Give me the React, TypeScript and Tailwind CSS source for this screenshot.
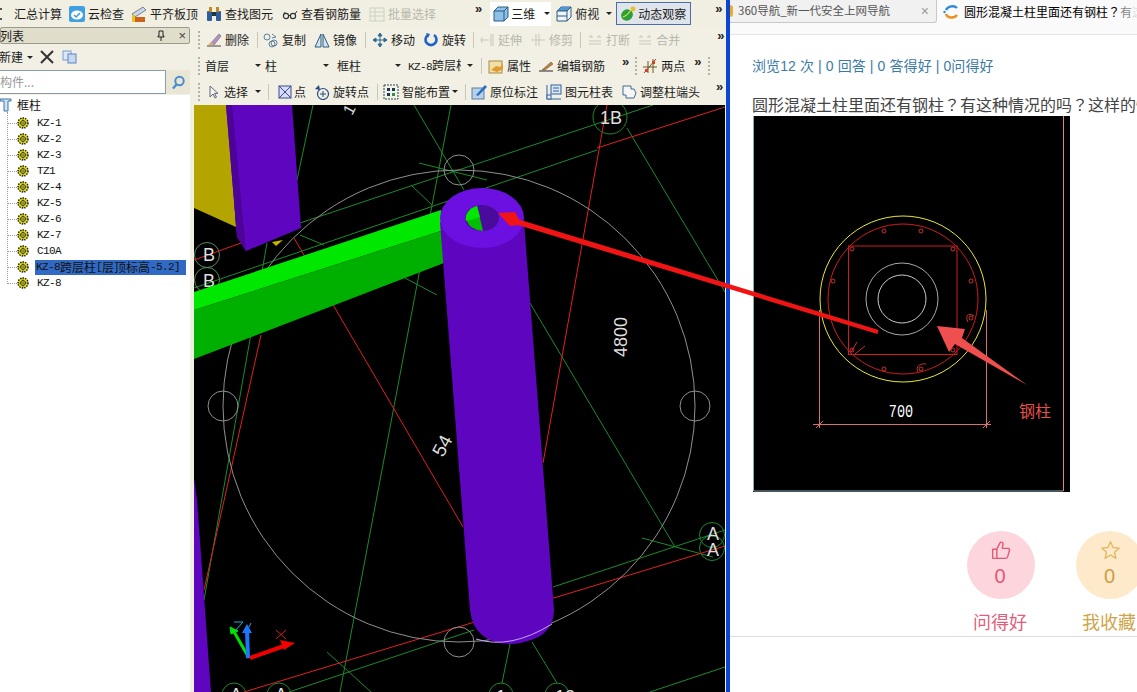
import React from "react";

type IconProps = { children?: React.ReactNode };
const Ico = ({ children }: IconProps) => (
  <svg width="16" height="16" viewBox="0 0 16 16" className="shrink-0" fill="none">
    {children}
  </svg>
);

const icons: Record<string, React.ReactNode> = {
  sum: <Ico><path d="M-1 3h10M-1 13h10M2 3l4 5-4 5" stroke="#222" strokeWidth="1.4" transform="translate(-7 0)" /></Ico>,
  cloud: (
    <Ico>
      <rect x="0" y="0" width="16" height="16" rx="2" fill="#3f9fe0" />
      <ellipse cx="8" cy="9" rx="6" ry="4.5" fill="#fff" />
      <path d="M5 9l2.2 2L11 7" stroke="#3f9fe0" strokeWidth="1.6" />
    </Ico>
  ),
  slab: (
    <Ico>
      <path d="M1 8L12 1l3 3L4 11z" fill="#c8d8e8" stroke="#667" strokeWidth=".8" />
      <rect x="3" y="11" width="11" height="5" fill="#c9641e" />
      <rect x="1" y="9" width="3" height="7" fill="#e8c020" />
    </Ico>
  ),
  binoc: (
    <Ico>
      <rect x="1" y="5" width="5" height="10" rx="1" fill="#2e5d9e" />
      <rect x="10" y="5" width="5" height="10" rx="1" fill="#2e5d9e" />
      <rect x="3" y="1" width="3" height="5" fill="#c08a20" />
      <rect x="10" y="1" width="3" height="5" fill="#c08a20" />
      <rect x="6" y="6" width="4" height="4" fill="#233" />
    </Ico>
  ),
  glasses: (
    <Ico>
      <circle cx="4" cy="10" r="2.6" stroke="#333" strokeWidth="1.2" />
      <circle cx="11" cy="10" r="2.6" stroke="#333" strokeWidth="1.2" />
      <path d="M6.5 9.5h2M13 8l2-3M2 8l1-2" stroke="#333" />
    </Ico>
  ),
  batch: (
    <Ico>
      <rect x="1" y="2" width="14" height="13" stroke="#d0cfc6" />
      <path d="M1 6h14M1 10h14M6 2v13" stroke="#d0cfc6" />
    </Ico>
  ),
  cube3d: (
    <Ico>
      <path d="M1 5l4-4h10v10l-4 4H1z" fill="#8fc0e8" stroke="#2c5a80" />
      <path d="M1 5h10v10M11 5l4-4" stroke="#2c5a80" />
    </Ico>
  ),
  cubeTop: (
    <Ico>
      <path d="M1 5l4-4h10v10l-4 4H1z" fill="#eef5fb" stroke="#2c5a80" />
      <path d="M1 5l4-4h10l-4 4z" fill="#4f97d0" />
      <path d="M1 5h10v10M11 5l4-4M1 10h10" stroke="#2c5a80" />
    </Ico>
  ),
  orbit: (
    <Ico>
      <ellipse cx="7" cy="9" rx="6" ry="5.5" fill="#2e9e3a" transform="rotate(-35 7 9)" />
      <path d="M3 11c3-1 6-4 8-7" stroke="#c4e84a" strokeWidth="1.2" />
      <circle cx="13" cy="3" r="2.4" fill="#e8c020" />
    </Ico>
  ),
  erase: (
    <Ico>
      <path d="M1 14h14" stroke="#444" />
      <path d="M5 11L13 2l2 2-7 9z" fill="#b48fd0" stroke="#665" strokeWidth=".6" />
      <path d="M2 13l3-3 3 3z" fill="#e0b060" />
    </Ico>
  ),
  copy: (
    <Ico>
      <circle cx="4" cy="5" r="3" stroke="#5c7f9c" />
      <circle cx="11" cy="11" r="3" stroke="#5c7f9c" />
      <circle cx="9" cy="12" r="3" stroke="#5c7f9c" />
      <path d="M9 2l4 3-4 1" stroke="#5c7f9c" />
    </Ico>
  ),
  mirror: (
    <Ico>
      <path d="M7 2L1 15h6zM9 2l6 13H9z" stroke="#2b5c80" fill="#d4e4f0" />
    </Ico>
  ),
  move: (
    <Ico>
      <path d="M8 1v14M1 8h14M8 1L6 4h4zM8 15l-2-3h4zM1 8l3-2v4zM15 8l-3-2v4z" stroke="#2c6a94" fill="#2c6a94" />
    </Ico>
  ),
  rotate: (
    <Ico>
      <path d="M11 3a5.5 5.5 0 1 1-6 0" stroke="#1f62c8" strokeWidth="2.6" />
      <path d="M3 1l4 1-2 4z" fill="#1f62c8" />
    </Ico>
  ),
  extend: <Ico><path d="M1 8h9M3 5v6M12 2v12M14 2v12" stroke="#c8c7bd" /></Ico>,
  trim: <Ico><path d="M1 8h14M6 2v12M9 2v12" stroke="#c8c7bd" /></Ico>,
  cut: <Ico><path d="M2 5h4M10 5h4M2 12h12M2 9h12M4 3v2M12 3v2" stroke="#c8c7bd" /></Ico>,
  attr: (
    <Ico>
      <rect x="1" y="3" width="13" height="12" fill="#f0e0a8" stroke="#a88a40" />
      <path d="M3 12l5-4 4 1 3-3v5l-6 3z" fill="#e09a30" />
    </Ico>
  ),
  pen: (
    <Ico>
      <path d="M1 13h14" stroke="#222" />
      <path d="M4 12L13 4l2 2-8 6z" fill="#c08040" stroke="#553" strokeWidth=".5" />
    </Ico>
  ),
  twoPts: (
    <Ico>
      <path d="M2 15L14 1M1 9h14M6 3v12M11 1v14" stroke="#6b5a20" />
      <rect x="3" y="11" width="3" height="3" fill="#d84020" />
      <rect x="10" y="3" width="3" height="3" fill="#d84020" />
    </Ico>
  ),
  pointer: <Ico><path d="M5 2v11l3-3 2 4 1.5-.8-2-3.8H13z" fill="#f4f4f4" stroke="#667" /></Ico>,
  point: (
    <Ico>
      <rect x="2" y="2" width="12" height="12" fill="#d8dcf4" stroke="#3a4a90" />
      <path d="M2 2l12 12M14 2L2 14" stroke="#3a4a90" />
    </Ico>
  ),
  rotPt: (
    <Ico>
      <circle cx="9" cy="10" r="5.5" stroke="#254a80" strokeWidth="1.2" />
      <path d="M9 7v6M6 10h6" stroke="#254a80" />
      <path d="M1 5l4-4 1 5z" fill="#254a80" />
    </Ico>
  ),
  smart: (
    <Ico>
      <rect x="1" y="1" width="14" height="14" fill="#eef4e8" stroke="#345" strokeDasharray="2 1" />
      <rect x="4" y="4" width="3" height="3" fill="#235" />
      <rect x="9" y="4" width="3" height="3" fill="#235" />
      <rect x="4" y="9" width="3" height="3" fill="#235" />
      <rect x="9" y="9" width="3" height="3" fill="#3a8a50" />
    </Ico>
  ),
  mark: (
    <Ico>
      <rect x="1" y="4" width="12" height="11" fill="#b8d0e8" stroke="#5a80a8" />
      <path d="M5 11L14 1l2 2-9 9z" fill="#2c6cc0" />
    </Ico>
  ),
  table: (
    <Ico>
      <path d="M1 1v14h14" stroke="#3060a0" />
      <rect x="5" y="1" width="10" height="9" fill="#dce8f6" stroke="#3060a0" />
      <path d="M7 4h6M7 7h6" stroke="#3060a0" />
      <rect x="1" y="11" width="4" height="4" fill="#e8eef8" stroke="#3060a0" />
    </Ico>
  ),
  adjust: <Ico><path d="M2 2h8v3h3l2 4-2 5H5v-3H2z" fill="#f6f6f6" stroke="#3d6a94" /></Ico>,
};

const Grip = ({ className = "" }: { className?: string }) => (
  <div className={`w-[3px] h-[18px] shrink-0 border-l-2 border-dotted border-[#b5b2a0] ${className}`} />
);
const Sep = ({ className = "" }: { className?: string }) => (
  <div className={`w-px h-[16px] shrink-0 bg-[#c9c6b4] ${className}`} />
);
const Caret = ({ className = "" }: { className?: string }) => (
  <div className={`w-0 h-0 shrink-0 border-x-[3px] border-x-transparent border-t-[3px] border-t-[#222] ${className}`} />
);
const More = ({ className = "" }: { className?: string }) => (
  <span className={`shrink-0 self-start mt-[2px] text-[13px] leading-none font-bold text-[#222] font-['Liberation_Sans',sans-serif] ${className}`}>»</span>
);
const Tool = ({
  icon,
  label,
  className = "",
  muted = false,
}: {
  icon: string;
  label: string;
  className?: string;
  muted?: boolean;
}) => (
  <div className={`flex items-center gap-[3px] shrink-0 ${className}`}>
    {icons[icon]}
    <span className={`whitespace-nowrap ${muted ? "text-[#b8b7ad]" : "text-[#1c1c1c]"}`}>{label}</span>
  </div>
);

const Gear = () => (
  <svg width="12" height="12" viewBox="0 0 12 12" className="shrink-0">
    <circle cx="6" cy="6" r="5" fill="#f0f000" stroke="#222" strokeWidth="1.5" strokeDasharray="1.5 1" />
    <circle cx="6" cy="6" r="2.5" fill="none" stroke="#333" strokeWidth="1" />
    <path d="M1 6h10M6 1v10" stroke="#333" strokeWidth=".6" />
  </svg>
);

const TreeRow = ({ children, selected = false }: { children: React.ReactNode; selected?: boolean }) => (
  <div className="h-4 flex items-center relative">
    <div className="w-[10px] ml-[7px] border-t border-dotted border-[#999]" />
    <Gear />
    <div
      className={`h-[15px] flex items-center text-[#111] font-['Liberation_Mono',monospace] text-[11px] tracking-[-0.6px] whitespace-nowrap ${
        selected ? "bg-[#316ac5] ml-[6px] pl-px w-[151px]" : "ml-[8px]"
      }`}
    >
      {children}
    </div>
  </div>
);

const C = ({ children }: { children: React.ReactNode }) => (
  <span className="text-[12px] tracking-normal font-['Noto_Sans_CJK_SC',sans-serif]">{children}</span>
);

const Q = () => <span className="font-['Noto_Sans_CJK_TC',sans-serif]">？</span>;

const G = "#1c8a2c";
const R = "#e02020";
const W = "#909090";

const Canvas = () => (
  <svg viewBox="194 105 531 587" className="block w-[531px] h-[587px]">
    <rect x="194" y="105" width="531" height="587" fill="#000" />
    <g stroke={G} strokeWidth="1" fill="none">
      <path d="M194 288L597 150" />
      <path d="M300 223L653 105" />
      <path d="M414 105L464 190" />
      <path d="M451 105L340 692" />
      <path d="M313 105L297 180" />
      <path d="M267 243L204 600" />
      <path d="M419 163L487 180" />
      <path d="M411 185L432 205" />
      <path d="M300 235L324 245" />
      <path d="M627 128L725 292" />
      <path d="M530 303L675 547" />
      <path d="M403 277L437 295" />
      <path d="M642 538L713 557" />
      <path d="M553 587L725 530" />
      <path d="M650 692L725 667" />
      <path d="M289 692L474 630" />
      <path d="M327 652L371 692" />
      <path d="M510 644L502 683" />
      <path d="M532 642L557 683" />
      <circle cx="610" cy="117" r="17" />
      <circle cx="712" cy="535" r="12.500" />
      <circle cx="712" cy="548" r="12.500" />
      <circle cx="501" cy="695" r="12" />
      <circle cx="557" cy="695" r="12" />
      <circle cx="234" cy="695" r="12" />
      <circle cx="279" cy="695" r="12" />
      <circle cx="207" cy="255" r="12.500" stroke="#5a8a60" />
      <circle cx="207" cy="280" r="12.500" stroke="#5a8a60" />
    </g>
    <g stroke={R} strokeWidth="1" fill="none">
      <path d="M607 105L543 463" />
      <path d="M597 148L725 107" />
      <path d="M294 238L463 527" />
      <path d="M244 692L725 546" />
      <path d="M261 335L204 590" />
      <path d="M194 260L241 243" />
    </g>
    <g stroke={W} strokeWidth="1" fill="none">
      <circle cx="459" cy="406" r="236" />
      <circle cx="459" cy="170" r="15" />
      <circle cx="223" cy="406" r="15" />
      <circle cx="695" cy="406" r="15" />
      <circle cx="459" cy="642" r="15" />
    </g>
    <g fill="#ddd" fontFamily="'Liberation Sans',sans-serif">
      <text x="209" y="261" fontSize="18" textAnchor="middle">B</text>
      <text x="209" y="287" fontSize="18" textAnchor="middle">B</text>
      <text x="611" y="124" fontSize="18" textAnchor="middle">1B</text>
      <text x="713" y="540" fontSize="18" textAnchor="middle">A</text>
      <text x="713" y="556" fontSize="18" textAnchor="middle">A</text>
      <text x="501" y="703" fontSize="18" textAnchor="middle">1</text>
      <text x="565" y="703" fontSize="18" textAnchor="middle">12</text>
      <text x="236" y="701" fontSize="18" textAnchor="middle">A</text>
      <text x="281" y="701" fontSize="18" textAnchor="middle">A</text>
      <text transform="translate(627 337) rotate(-90)" fontSize="18" textAnchor="middle">4800</text>
      <text transform="translate(443 458) rotate(-62)" fontSize="19">54</text>
      <text transform="translate(352 116) rotate(-62)" fontSize="16">1</text>
    </g>
    <path d="M194 105H228L236 227L194 208Z" fill="#b3a400" />
    <path d="M272 242L283 240L276 246Z" fill="#c8b400" />
    <path d="M226 105H292L301 228L246 251L237 237Z" fill="#5e05c0" />
    <path d="M226 105H232L246 251L237 237Z" fill="#4b0398" />
    <path d="M194 478L197 500L211 692H194Z" fill="#5e05c0" />
    <path d="M194 292L441 210L444 230L194 310Z" fill="#00e800" />
    <path d="M194 310L444 230L444 263L194 359Z" fill="#00b000" />
    <path d="M440 222L470 610Q474 644 512 644Q554 640 554 610L524 222Z" fill="#5e05c0" />
    <ellipse cx="482" cy="218" rx="42" ry="30" fill="#6b10e0" />
    <ellipse cx="482" cy="218" rx="17" ry="13" fill="#4a0a9c" />
    <path d="M477 206A17 13 0 0 0 483 231Z" fill="#00c000" />
    <path d="M477 206L480 217L466 221A17 13 0 0 1 477 206Z" fill="#00e800" />
    <path d="M476 639Q510 650 552 624" stroke="#c6a6ff" strokeWidth="1" fill="none" />
    <path d="M249 658L233 630" stroke="#00e000" strokeWidth="3" />
    <path d="M230 627L238 631L231 634Z" fill="#00e000" stroke="#00e000" />
    <path d="M248 658L247 630" stroke="#1878ff" strokeWidth="4" />
    <path d="M247 624L252 633H242Z" fill="#1878ff" />
    <path d="M250 658L284 646" stroke="#f00000" strokeWidth="4" />
    <path d="M295 643L280 640L284 650Z" fill="#f00000" />
    <path d="M276 630L286 639M286 630L276 639" stroke="#d02020" />
    <path d="M234 622H243L235 631M249 627L251 623" stroke="#2ea8d0" fill="none" />
  </svg>
);

const Drawing = () => (
  <svg viewBox="753 116 317 376" className="block w-[317px] h-[376px]">
    <rect x="753" y="116" width="317" height="376" fill="#000" />
    <path d="M753.5 116V491H1063" stroke="#8fa9b8" fill="none" />
    <path d="M1063.5 116V491" stroke="#d88a8a" fill="none" />
    <circle cx="903" cy="299" r="83" stroke="#e8e830" fill="none" />
    <circle cx="903" cy="299" r="75" stroke="#d01c1c" fill="none" />
    <rect x="848.5" y="246" width="108.5" height="108.5" stroke="#d01c1c" fill="none" />
    <circle cx="902" cy="299" r="36" stroke="#a8a8a8" fill="none" />
    <circle cx="902" cy="299" r="24" stroke="#c8c8c8" fill="none" />
    <g stroke="#c83030" fill="none">
      <circle cx="884" cy="231" r="2" />
      <circle cx="921" cy="231" r="2" />
      <circle cx="852" cy="249" r="2" />
      <circle cx="953" cy="249" r="2" />
      <circle cx="833" cy="281" r="2" />
      <circle cx="971" cy="281" r="2" />
      <circle cx="852" cy="350" r="2" />
      <circle cx="953" cy="350" r="2" />
      <circle cx="884" cy="369" r="2" />
      <circle cx="921" cy="369" r="2" />
      <circle cx="971" cy="318" r="2" />
      <path d="M918 372c-3-5 2-9 8-8M968 322c-3-6 0-10 6-6M851 352l6-10M855 354l10-8" />
    </g>
    <g stroke="#d87070" fill="none">
      <path d="M819.5 310V428M986.5 310V428M813 424.5H991" />
      <path d="M816 428l7-7M983 428l7-7" />
    </g>
    <text x="901" y="417" fontSize="18" fill="#fff" textAnchor="middle" fontFamily="'Liberation Mono',monospace" transform="translate(225.250 0) scale(.75 1)">700</text>
    <text x="1019" y="417" fontSize="16" fill="#e4504c" fontFamily="'Noto Sans CJK SC',sans-serif">钢柱</text>
    <path d="M937 326L965 329L962 338L1027 385L955 344L949 352Z" fill="#f04f4f" />
  </svg>
);

export default function App() {
  return (
    <div className="relative w-[1137px] h-[692px] overflow-hidden flex bg-white font-['Noto_Sans_CJK_SC',sans-serif]">
      {/* CAD application */}
      <div className="w-[730px] h-full shrink-0 flex flex-col bg-[#f2f0e4] border-r-4 border-[#0b45d6] text-[12px] leading-none overflow-hidden">
        <div className="h-[27px] shrink-0 flex items-center bg-[#f1efe2] overflow-hidden">
          <div className="w-[8px] h-4 overflow-hidden shrink-0">{icons.sum}</div>
          <span className="ml-[6px] text-[#1c1c1c] whitespace-nowrap">汇总计算</span>
          <Tool className="ml-[7px]" icon="cloud" label="云检查" />
          <Tool className="ml-[7px]" icon="slab" label="平齐板顶" />
          <Tool className="ml-[8px]" icon="binoc" label="查找图元" />
          <Tool className="ml-[9px]" icon="glasses" label="查看钢筋量" />
          <Tool className="ml-[8px]" icon="batch" label="批量选择" muted />
          <More className="ml-[39px]" />
          <div className="ml-[8px] w-[61px] h-[24px] bg-white flex items-center pl-[3px] shrink-0">
            {icons.cube3d}
            <span className="ml-[2px] text-[#1c1c1c]">三维</span>
            <Caret className="ml-[9px]" />
          </div>
          <Tool className="ml-[5px]" icon="cubeTop" label="俯视" />
          <Caret className="ml-[7px]" />
          <div className="ml-[4px] w-[75px] h-[23px] shrink-0 flex items-center gap-[2px] pl-[3px] bg-[#dfe4ea] border border-[#4a6ea9]">
            {icons.orbit}
            <span className="whitespace-nowrap text-[#1c1c1c]">动态观察</span>
          </div>
          <More className="ml-[24px]" />
        </div>

        <div className="flex-1 flex min-h-0">
          {/* Left list panel */}
          <div className="w-[194px] shrink-0 flex flex-col">
            <div className="w-[190px] h-[17px] shrink-0 flex items-center bg-[#e0ddcb] border border-[#9c9a8a] rounded-[2px] overflow-hidden">
              <span className="text-[12px] text-[#222] -ml-[1px]">列表</span>
              <svg width="10" height="12" viewBox="0 0 10 12" className="ml-auto mr-[12px]">
                <path d="M3 1h4v5h1v1H2V6h1zM5 7v4" stroke="#222" fill="none" />
              </svg>
              <span className="mr-[3px] text-[13px] text-[#444] font-['Liberation_Sans',sans-serif]">×</span>
            </div>
            <div className="w-[190px] h-[26px] shrink-0 flex items-center">
              <span className="text-[#1c1c1c] -ml-[1px] whitespace-nowrap">新建</span>
              <Caret className="ml-[4px]" />
              <svg width="14" height="14" viewBox="0 0 14 14" className="ml-[7px]">
                <path d="M1 1l12 12M13 1L1 13" stroke="#333" strokeWidth="2" />
              </svg>
              <svg width="16" height="14" viewBox="0 0 16 14" className="ml-[8px]">
                <rect x="1" y="1" width="8" height="9" fill="#dbe6f6" stroke="#7a9cd0" />
                <rect x="6" y="4" width="8" height="9" fill="#c6d8f2" stroke="#5f86c4" />
              </svg>
            </div>
            <div className="w-[190px] h-[25px] shrink-0 flex">
              <div className="w-[166px] h-[24px] bg-white border border-[#8a9bb0] border-l-0 flex items-center text-[#999] pl-0">
                构件...
              </div>
              <div className="w-[24px] h-[24px] flex items-center justify-center bg-[#e9e6d6]">
                <svg width="15" height="15" viewBox="0 0 15 15" fill="none">
                  <circle cx="8.5" cy="6" r="4.2" stroke="#4a8ed0" strokeWidth="2" />
                  <path d="M5.500 9.500L2 13.500" stroke="#4a8ed0" strokeWidth="2.4" />
                </svg>
              </div>
            </div>
            <div className="w-[190px] flex-1 bg-white relative overflow-hidden pt-[1px]">
              <div className="h-[17px] mb-[2px] flex items-center">
                <svg width="12" height="14" viewBox="0 0 12 14" className="ml-0 shrink-0">
                  <path d="M0 1h11v2H8v10H4V3H0z" fill="#cfe2f4" stroke="#3a72a8" />
                </svg>
                <span className="ml-[5px] text-[#111]">框柱</span>
              </div>
              <div className="absolute left-[7px] top-[17px] h-[170px] border-l border-dotted border-[#999]" />
              <TreeRow>KZ-1</TreeRow>
              <TreeRow>KZ-2</TreeRow>
              <TreeRow>KZ-3</TreeRow>
              <TreeRow>TZ1</TreeRow>
              <TreeRow>KZ-4</TreeRow>
              <TreeRow>KZ-5</TreeRow>
              <TreeRow>KZ-6</TreeRow>
              <TreeRow>KZ-7</TreeRow>
              <TreeRow>C10A</TreeRow>
              <TreeRow selected>
                KZ-8<C>跨层柱</C>[<C>层顶标高</C>-5.2]
              </TreeRow>
              <TreeRow>KZ-8</TreeRow>
            </div>
          </div>

          {/* Main work area */}
          <div className="w-[532px] shrink-0 flex flex-col">
            <div className="h-[26px] shrink-0 flex items-center overflow-hidden">
              <Grip className="ml-[4px]" />
              <Tool className="ml-[5px]" icon="erase" label="删除" />
              <Sep className="ml-[8px]" />
              <Tool className="ml-[5px]" icon="copy" label="复制" />
              <Tool className="ml-[8px]" icon="mirror" label="镜像" />
              <Sep className="ml-[8px]" />
              <Tool className="ml-[6px]" icon="move" label="移动" />
              <Tool className="ml-[8px]" icon="rotate" label="旋转" />
              <Sep className="ml-[7px]" />
              <Tool className="ml-[5px]" icon="extend" label="延伸" muted />
              <Tool className="ml-[8px]" icon="trim" label="修剪" muted />
              <Sep className="ml-[7px]" />
              <Tool className="ml-[6px]" icon="cut" label="打断" muted />
              <Tool className="ml-[7px]" icon="cut" label="合并" muted />
              <More className="ml-[37px]" />
            </div>
            <div className="h-[25px] shrink-0 flex items-center overflow-hidden">
              <Grip className="ml-[4px]" />
              <span className="ml-[4px] w-[50px] shrink-0 text-[#1c1c1c]">首层</span>
              <Caret />
              <span className="ml-[4px] w-[58px] shrink-0 text-[#1c1c1c]">柱</span>
              <Caret />
              <span className="ml-[8px] w-[58px] shrink-0 text-[#1c1c1c]">框柱</span>
              <Caret />
              <span className="ml-[7px] w-[53px] shrink-0 overflow-hidden whitespace-nowrap text-[#1c1c1c]">
                <span className="font-['Liberation_Mono',monospace] text-[11px] tracking-[-0.6px]">KZ-8</span>跨层柱
              </span>
              <Caret className="ml-[6px]" />
              <Sep className="ml-[8px]" />
              <Tool className="ml-[6px]" icon="attr" label="属性" />
              <Tool className="ml-[7px]" icon="pen" label="编辑钢筋" />
              <More className="ml-[17px]" />
              <Grip className="ml-[6px]" />
              <Tool className="ml-[4px]" icon="twoPts" label="两点" />
              <More className="ml-[9px]" />
              <Grip className="ml-[6px]" />
            </div>
            <div className="h-[27px] shrink-0 flex items-center overflow-hidden">
              <Grip className="ml-[4px]" />
              <Tool className="ml-[4px]" icon="pointer" label="" />
              <span className="text-[#1c1c1c] whitespace-nowrap">选择</span>
              <Caret className="ml-[7px]" />
              <Sep className="ml-[7px]" />
              <Tool className="ml-[8px]" icon="point" label="" />
              <span className="-ml-[2px] text-[#1c1c1c]">点</span>
              <Tool className="ml-[8px]" icon="rotPt" label="旋转点" />
              <Sep className="ml-[8px]" />
              <Tool className="ml-[5px]" icon="smart" label="智能布置" />
              <Caret className="ml-[2px]" />
              <Sep className="ml-[7px]" />
              <Tool className="ml-[5px]" icon="mark" label="原位标注" />
              <Tool className="ml-[8px]" icon="table" label="图元柱表" />
              <Tool className="ml-[8px]" icon="adjust" label="调整柱端头" />
              <More className="ml-[16px]" />
            </div>
            <Canvas />
          </div>
        </div>
      </div>

      {/* Browser */}
      <div className="flex-1 min-w-0 flex flex-col overflow-hidden">
        <div className="h-[23px] shrink-0 flex bg-[#f6f6f6] text-[12px] leading-none">
          <div className="w-[207px] shrink-0 flex items-center bg-[#f1f1f1] border-r border-b border-[#c8c8c8] rounded-br-[3px] overflow-hidden">
            <div className="w-[3px] h-[12px] bg-[#e8b020] rounded-r-full shrink-0" />
            <span className="ml-[5px] text-[#555] text-[11.5px] whitespace-nowrap">360导航_新一代安全上网导航</span>
            <span className="ml-auto mr-[7px] text-[#999] text-[14px] font-['Liberation_Sans',sans-serif]">×</span>
          </div>
          <div className="flex-1 min-w-0 flex items-center bg-[#fafafa] overflow-hidden">
            <svg width="16" height="14" viewBox="0 0 16 14" className="ml-[6px] shrink-0" fill="none">
              <path d="M3 9c1 4 8 5 11 1" stroke="#e89020" strokeWidth="2.4" />
              <path d="M3 5c2-4 8-5 11-2" stroke="#2a8ad8" strokeWidth="2.4" />
              <circle cx="1.5" cy="7" r="1.2" fill="#2a8ad8" />
            </svg>
            <span className="ml-[5px] whitespace-nowrap text-black">
              圆形混凝土柱里面还有钢柱<Q /><span className="text-[#888]">有</span>
              <span className="text-[#ddd]">这</span>
            </span>
          </div>
        </div>
        <div className="h-[12px] shrink-0 bg-[#fafafa] border-b border-[#e4e4e4]" />
        <div className="flex-1 min-h-0 flex flex-col overflow-hidden bg-white">
          <div className="pl-[22px] pt-[22px] h-[57px] shrink-0 text-[14px] leading-[18px] tracking-[0.1px] text-[#3b7aa6] whitespace-nowrap font-['Liberation_Sans','Noto_Sans_CJK_SC',sans-serif]">
            浏览12 次 | 0 回答 | 0 答得好 | 0问得好
          </div>
          <div className="pl-[22px] h-[24px] shrink-0 text-[16px] leading-[24px] text-[#444] whitespace-nowrap">
            圆形混凝土柱里面还有钢柱<Q />有这种情况的吗<Q />这样的情况
          </div>
          <div className="pl-[23px] shrink-0">
            <Drawing />
          </div>
          <div className="flex shrink-0 mt-[39px] pl-[237px] gap-[41px]">
            <div className="w-[68px] shrink-0 flex flex-col items-center">
              <div className="w-[68px] h-[68px] rounded-full bg-[#fdd6dd] flex flex-col items-center pt-[9px] text-[#e05a78]">
                <svg width="20" height="20" viewBox="0 0 24 24" fill="none" stroke="#e05a78" strokeWidth="1.7" strokeLinejoin="round">
                  <path d="M2 11h5v11H2zM7 11l4-8c2-1 3.500 0 3.500 2l-1 5h7c1.500 0 2 1.500 1.500 3l-2 7c-.5 1.500-1.500 2-3 2H7" />
                </svg>
                <span className="text-[20px] leading-[24px] mt-[4px] -ml-[2px] font-['Liberation_Sans',sans-serif]">0</span>
              </div>
              <span className="mt-[10px] -ml-[2px] text-[18px] leading-[24px] text-[#e0607c] whitespace-nowrap">问得好</span>
            </div>
            <div className="w-[68px] shrink-0 flex flex-col items-center">
              <div className="w-[68px] h-[68px] rounded-full bg-[#feeacb] flex flex-col items-center pt-[9px] text-[#c9a040]">
                <svg width="21" height="20" viewBox="0 0 24 24" fill="none" stroke="#e2b860" strokeWidth="1.6" strokeLinejoin="round">
                  <path d="M12 2l3 7 7.500.7-5.700 5 1.700 7.300L12 18l-6.500 4 1.700-7.300-5.700-5L9 9z" />
                </svg>
                <span className="text-[20px] leading-[24px] mt-[4px] -ml-[1px] font-['Liberation_Sans',sans-serif]">0</span>
              </div>
              <span className="mt-[10px] -ml-[2px] text-[18px] leading-[24px] text-[#cfa54a] whitespace-nowrap">我收藏</span>
            </div>
          </div>
          <div className="mt-[3px] h-px shrink-0 bg-[#dddddd]" />
        </div>
      </div>

      {/* Red annotation arrow lying over both windows */}
      <svg className="absolute left-0 top-0 pointer-events-none" width="1137" height="692" viewBox="0 0 1137 692">
        <path d="M498 213L515 212L519 219.500L878.600 330L877.400 334L518 225L510 226Z" fill="#f01414" />
      </svg>
    </div>
  );
}
